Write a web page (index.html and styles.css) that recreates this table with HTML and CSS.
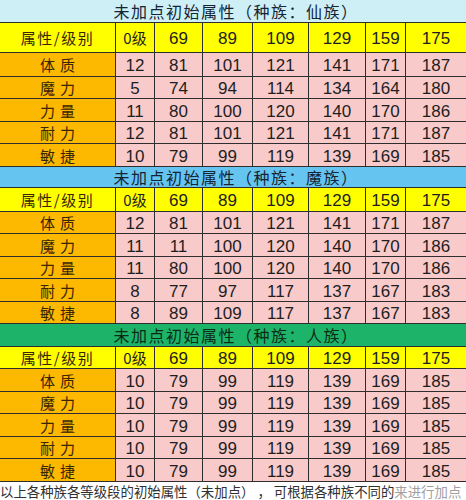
FILE: index.html
```html
<!DOCTYPE html>
<html lang="zh">
<head>
<meta charset="utf-8">
<link rel="stylesheet" href="styles.css">
</head>
<body>
<div class="page">
  <section class="sheet s1">
    <div class="title">未加点初始属性（种族：仙族）</div>
    <div class="lbl hd">属性/级别</div><div class="hd cj">0级</div><div class="hd">69</div><div class="hd">89</div><div class="hd">109</div><div class="hd">129</div><div class="hd">159</div><div class="hd">175</div>
    <div class="lbl">体质</div><div>12</div><div>81</div><div>101</div><div>121</div><div>141</div><div>171</div><div>187</div>
    <div class="lbl">魔力</div><div>5</div><div>74</div><div>94</div><div>114</div><div>134</div><div>164</div><div>180</div>
    <div class="lbl">力量</div><div>11</div><div>80</div><div>100</div><div>120</div><div>140</div><div>170</div><div>186</div>
    <div class="lbl">耐力</div><div>12</div><div>81</div><div>101</div><div>121</div><div>141</div><div>171</div><div>187</div>
    <div class="lbl">敏捷</div><div>10</div><div>79</div><div>99</div><div>119</div><div>139</div><div>169</div><div>185</div>
  </section>
  <section class="sheet s2">
    <div class="title">未加点初始属性（种族：魔族）</div>
    <div class="lbl hd">属性/级别</div><div class="hd cj">0级</div><div class="hd">69</div><div class="hd">89</div><div class="hd">109</div><div class="hd">129</div><div class="hd">159</div><div class="hd">175</div>
    <div class="lbl">体质</div><div>12</div><div>81</div><div>101</div><div>121</div><div>141</div><div>171</div><div>187</div>
    <div class="lbl">魔力</div><div>11</div><div>11</div><div>100</div><div>120</div><div>140</div><div>170</div><div>186</div>
    <div class="lbl">力量</div><div>11</div><div>80</div><div>100</div><div>120</div><div>140</div><div>170</div><div>186</div>
    <div class="lbl">耐力</div><div>8</div><div>77</div><div>97</div><div>117</div><div>137</div><div>167</div><div>183</div>
    <div class="lbl">敏捷</div><div>8</div><div>89</div><div>109</div><div>117</div><div>137</div><div>167</div><div>183</div>
  </section>
  <section class="sheet s3">
    <div class="title">未加点初始属性（种族：人族）</div>
    <div class="lbl hd">属性/级别</div><div class="hd cj">0级</div><div class="hd">69</div><div class="hd">89</div><div class="hd">109</div><div class="hd">129</div><div class="hd">159</div><div class="hd">175</div>
    <div class="lbl">体质</div><div>10</div><div>79</div><div>99</div><div>119</div><div>139</div><div>169</div><div>185</div>
    <div class="lbl">魔力</div><div>10</div><div>79</div><div>99</div><div>119</div><div>139</div><div>169</div><div>185</div>
    <div class="lbl">力量</div><div>10</div><div>79</div><div>99</div><div>119</div><div>139</div><div>169</div><div>185</div>
    <div class="lbl">耐力</div><div>10</div><div>79</div><div>99</div><div>119</div><div>139</div><div>169</div><div>185</div>
    <div class="lbl">敏捷</div><div>10</div><div>79</div><div>99</div><div>119</div><div>139</div><div>169</div><div>185</div>
  </section>
  <p class="note">以上各种族各等级段的初始属性（未加点）&nbsp;，&nbsp;可根据各种族不同的<span class="faded">来进行加点</span></p>
</div>
</body>
</html>
```
FILE: styles.css
```css
html, body {
  margin: 0;
  padding: 0;
  background: #ffffff;
}
.page {
  width: 466px;
  height: 500px;
  overflow: hidden;
  font-family: "Noto Sans CJK SC", "Noto Sans", sans-serif;
}
.sheet {
  display: grid;
  grid-template-columns: 116px 39px 48px 50px 56px 57px 40px 60px;
}
.sheet > div {
  box-sizing: border-box;
  border-right: 1px solid #2e2e2e;
  border-bottom: 1px solid #2e2e2e;
  background: #f8caca;
  color: #1e1e1e;
  font-family: "Liberation Sans", Arial, sans-serif;
  font-size: 17px;
  display: flex;
  align-items: center;
  justify-content: center;
  line-height: 1;
  padding-top: 2px;
}
.sheet > div:nth-child(8n+1):not(.lbl):not(.title) {
  border-right: none;
}
.sheet > .title {
  grid-column: 1 / -1;
  border-right: none;
  font-family: "Noto Sans CJK SC", sans-serif;
  font-size: 16px;
  letter-spacing: 1.5px;
  color: #152433;
  padding-left: 6px;
  padding-top: 0;
}
.sheet > .hd {
  background: #ffff00;
  color: #1e1e1e;
}
.sheet > .cj {
  font-family: "Noto Sans CJK SC", sans-serif;
  font-size: 15px;
  padding-top: 0;
}
.sheet > .lbl {
  background: #fdb800;
  color: #3a2600;
  font-family: "Noto Sans CJK SC", sans-serif;
  font-size: 15px;
  letter-spacing: 5px;
  padding-left: 5px;
  padding-top: 0;
}
.sheet > .lbl.hd {
  background: #ffff00;
  letter-spacing: 1.5px;
  padding-left: 0;
}
.s1 { grid-template-rows: 23px 30px 24px 22px 23px 22px 23px; }
.s1 > .title { background: #cdeff5; }
.s2 { grid-template-rows: 21px 24px 22px 23px 22px 23px 22px; }
.s2 > .title { background: #66c4f0; }
.s3 { grid-template-rows: 23px 22px 23px 22px 23px 22px 23px; }
.s3 > .title { background: #1db46a; color: #0d2a14; }
.note {
  margin: 0;
  height: 18px;
  line-height: 18px;
  font-size: 13.4px;
  color: #303030;
  white-space: nowrap;
}
.faded {
  color: #a0a0a0;
}
```
